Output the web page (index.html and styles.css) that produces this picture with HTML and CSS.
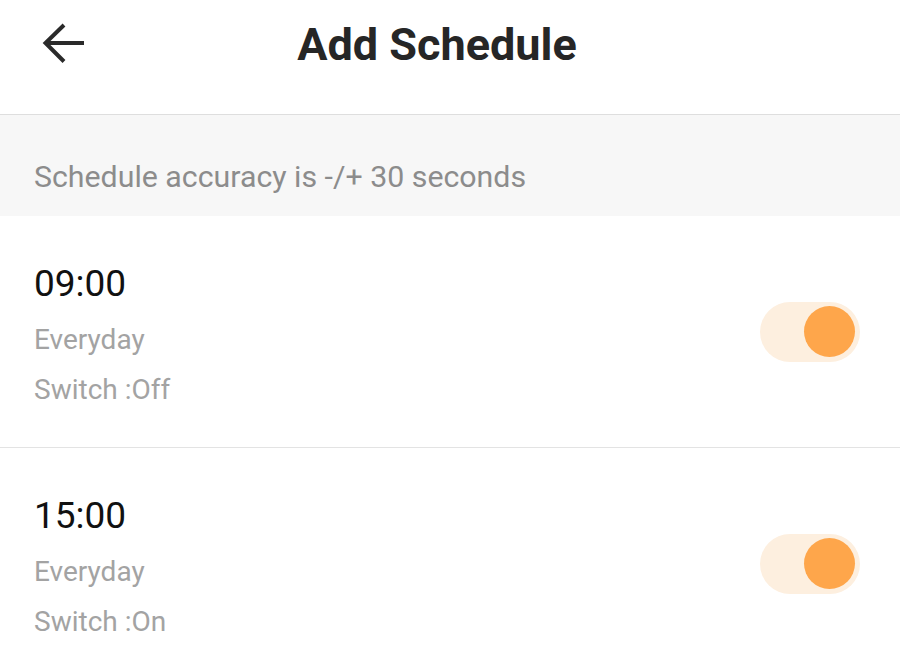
FILE: index.html
```html
<!DOCTYPE html>
<html>
<head>
<meta charset="utf-8">
<link rel="stylesheet" href="styles.css">
</head>
<body>
<header class="header">
  <div class="back">
    <svg width="44" height="44" viewBox="0 0 44 44"><path d="M22 4 L3.5 22 L22 40.5 M3.5 22 H42" fill="none" stroke="#2a2a2a" stroke-width="4" stroke-linejoin="miter"/></svg>
  </div>
  <h1 class="title">Add Schedule</h1>
  <div class="spacer"></div>
</header>
<div class="notice">Schedule accuracy is -/+ 30 seconds</div>
<div class="row">
  <div class="info">
    <div class="time">09:00</div>
    <div class="sub first">Everyday</div>
    <div class="sub">Switch :Off</div>
  </div>
  <div class="toggle"><div class="knob"></div></div>
</div>
<div class="row">
  <div class="info">
    <div class="time">15:00</div>
    <div class="sub first">Everyday</div>
    <div class="sub">Switch :On</div>
  </div>
  <div class="toggle"><div class="knob"></div></div>
</div>
</body>
</html>
```

FILE: styles.css
```css
html, body { margin: 0; padding: 0; background: #fff; }
body { font-family: Roboto, "Noto Sans", sans-serif; width: 900px; height: 669px; overflow: hidden; }

.header {
  display: flex;
  align-items: flex-start;
  height: 114px;
  border-bottom: 1px solid #dedede;
}
.back { width: 120px; padding: 21px 0 0 42px; box-sizing: border-box; }
.back svg { display: block; }
.title {
  flex: 1;
  margin: 0;
  padding-top: 15px;
  text-align: center;
  font-size: 45px;
  line-height: 60px;
  font-weight: 700;
  color: #262626;
}
.spacer { width: 146px; }

.notice {
  background: #f7f7f7;
  color: #8c8c8c;
  font-size: 30.3px;
  line-height: 40px;
  padding: 42px 34px 19px;
}

.row {
  display: flex;
  align-items: center;
  justify-content: space-between;
  padding: 0 40px 0 34px;
  border-bottom: 1px solid #e3e3e3;
}
.info { padding: 43px 0 32px; }
.time { font-size: 37px; line-height: 50px; color: #111; }
.sub { font-size: 28px; line-height: 50px; color: #a3a3a3; }
.sub.first { margin-top: 6px; }

.toggle {
  width: 100px;
  height: 60px;
  border-radius: 30px;
  background: #fdefdf;
  display: flex;
  align-items: center;
  justify-content: flex-end;
  padding-right: 5px;
  box-sizing: border-box;
}
.knob {
  width: 51px;
  height: 51px;
  border-radius: 50%;
  background: #fea64b;
}
```
